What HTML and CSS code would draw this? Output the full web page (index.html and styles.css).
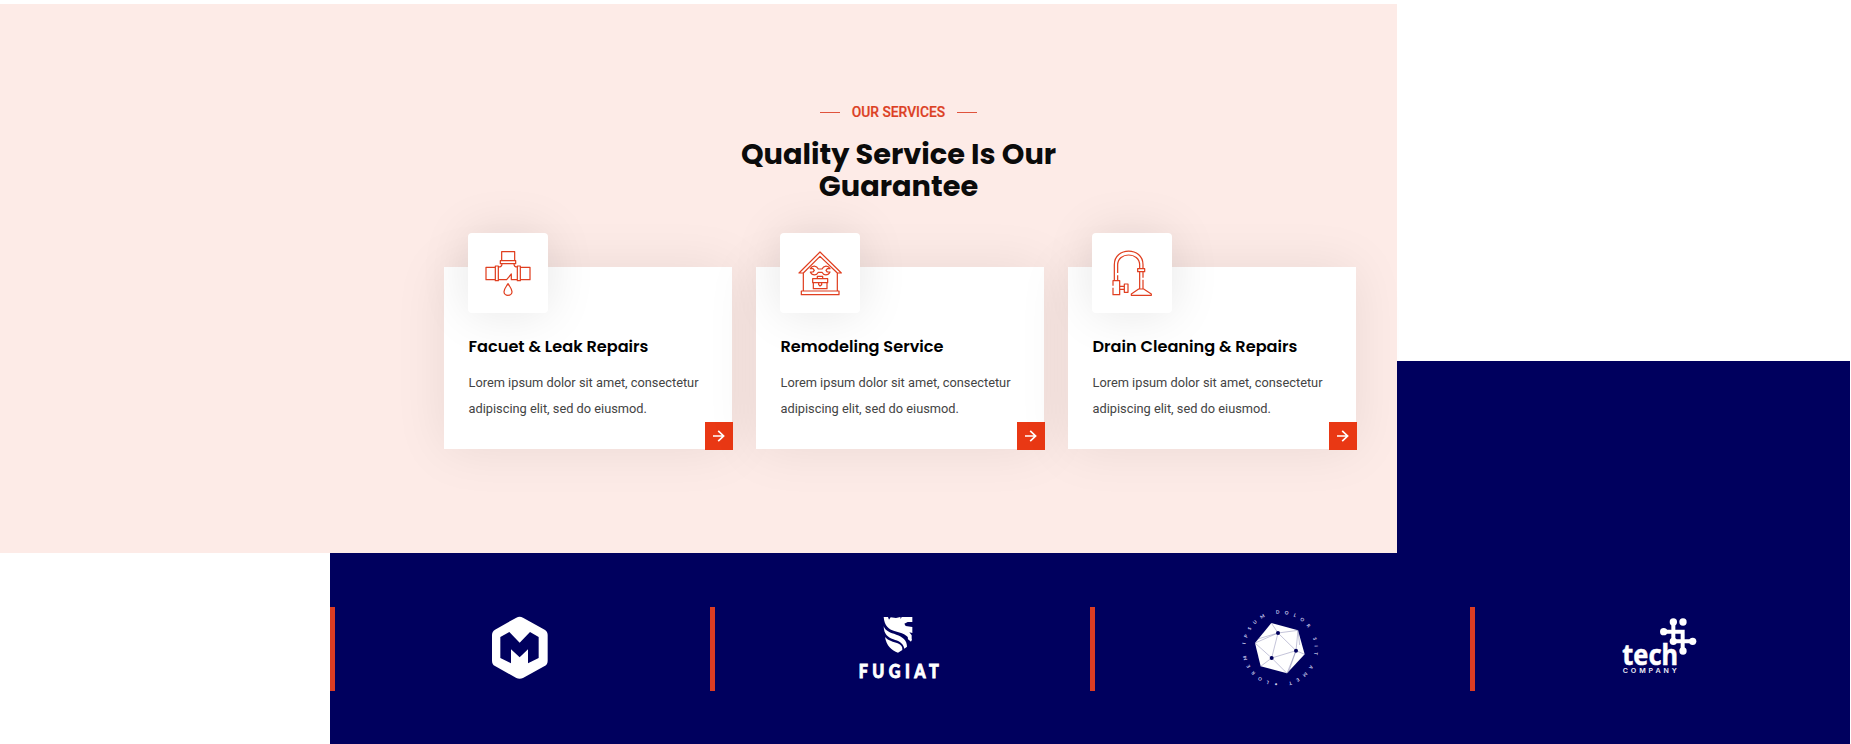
FILE: index.html
```
<!DOCTYPE html>
<html lang="en">
<head>
<meta charset="utf-8">
<title>Our Services</title>
<link rel="stylesheet" href="styles.css">
</head>
<body>
<section class="services">
  <header class="heading">
    <p class="eyebrow">OUR SERVICES</p>
    <h2 class="title">Quality Service Is Our<br>Guarantee</h2>
  </header>
  <div class="cards">
    <article class="card">
      <div class="icon-box">
        <svg class="icon" viewBox="114 38 240 240">
          <path d="M215 94H254V121H215zM211 121H257V130H211zM216 130C216 137 212 140 205 140M252 130C252 137 256 140 262 140M168 141H196V178H168zM196 137H205V181H196zM262 137H271V181H262zM271 141H300V178H271zM205 178H230L244 161V178H262M234 190C229 199 222 205 222 214A12 11 0 0 0 246 214C246 205 239 199 234 190z"/>
        </svg>
      </div>
      <h3 class="card-title">Facuet &amp; Leak Repairs</h3>
      <p class="card-text">Lorem ipsum dolor sit amet, consectetur adipiscing elit, sed do eiusmod.</p>
      <a class="more" href="#"><svg viewBox="0 0 28 28"><path d="M8 14H18.5M13.2 8.8L18.6 14L13.2 19.2"/></svg></a>
    </article>
    <article class="card">
      <div class="icon-box">
        <svg class="icon" viewBox="120 38 240 240">
          <path d="M240 95L177 158H190L240 108L292 158H304zM190 158V212M292 158V212M184 212H297V223H184zM218 175H263V187H218zM220 187V205H261V187M232 175V168H248V175M236 187H245V193L240 197L236 193z"/>
          <path d="M211 145H219L223 150L219 155H211C217 167 230 166 235 156H246C251 166 264 167 270 155H262L258 150L262 145H270C264 134 251 135 246 146H235C230 135 217 134 211 145z"/>
        </svg>
      </div>
      <h3 class="card-title">Remodeling Service</h3>
      <p class="card-text">Lorem ipsum dolor sit amet, consectetur adipiscing elit, sed do eiusmod.</p>
      <a class="more" href="#"><svg viewBox="0 0 28 28"><path d="M8 14H18.5M13.2 8.8L18.6 14L13.2 19.2"/></svg></a>
    </article>
    <article class="card">
      <div class="icon-box">
        <svg class="icon" viewBox="126 38 240 240">
          <path d="M193 181V133C193 79 279 79 279 133V145M203 158V134C203 94 269 94 269 134V145M203 165V181M263 145H284V154H263zM269 154V205M279 154V172M279 178V205M189 196V181H209V223H189V202M209 198H223M209 207H223M223 191H234V216H223zM266 206H281L304 221V225H244V221z"/>
        </svg>
      </div>
      <h3 class="card-title">Drain Cleaning &amp; Repairs</h3>
      <p class="card-text">Lorem ipsum dolor sit amet, consectetur adipiscing elit, sed do eiusmod.</p>
      <a class="more" href="#"><svg viewBox="0 0 28 28"><path d="M8 14H18.5M13.2 8.8L18.6 14L13.2 19.2"/></svg></a>
    </article>
  </div>
</section>
<section class="brands">
  <div class="brand">
    <svg class="logo logo-m" viewBox="510 225 180 198">
      <path class="solid" d="M589 233Q599 228 609 233L674 269Q683 274 683 285V362Q683 373 674 378L609 414Q599 419 589 414L525 378Q516 373 516 362V285Q516 274 525 269z"/>
      <path class="cut" d="M541 291L568 276L599 308L630 276L656 291V354L624 370V328L599 352L573 328V370L541 354z"/>
    </svg>
  </div>
  <div class="brand">
    <svg class="logo logo-fugiat" viewBox="470 70 255 201">
      <path class="solid" d="M550 79H563L566 87L571 80L587 82L600 79L601 85L604 79H636V94H622L612 99L616 106L636 109V127L627 125L634 134V151C622 133 603 126 582 121C566 117 552 105 550 79z"/>
      <path class="solid" d="M550 107C556 122 570 126 588 132C606 138 620 148 620 168L612 174C608 156 594 151 579 146C562 140 551 131 550 107zM554 139C564 151 580 153 592 158C603 163 607 169 606 178L593 186C574 179 558 165 554 139z"/>
      <path class="solid" d="M622 136L634 146L632 153L623 146z"/>
      <text class="fugiat" transform="translate(475 263) scale(.9 1)" textLength="267">FUGIAT</text>
    </svg>
  </div>
  <div class="brand">
    <svg class="logo logo-ring" viewBox="60 39 240 240">
      <path class="solid" d="M154 84L234 106L254 178L201 235L122 214L105 144z"/>
      <path class="edge" d="M105 144L174 114L228 167L155 189L105 144M154 84L174 114L234 106L228 167L254 178M122 214L155 189L201 235L228 167L205 233M174 114L155 189M113 132L174 114M234 106L239 150"/>
      <circle class="cut" cx="174" cy="114" r="6"/><circle class="cut" cx="228" cy="167" r="6"/><circle class="cut" cx="155" cy="189" r="6"/>
      <path id="ring" fill="none" d="M148 259A104 104 0 1 1 212 259A104 104 0 0 1 148 259"/>
      <text class="ring-text"><textPath href="#ring" textLength="636">LOREM IPSUM DOLOR SIT AMET •</textPath></text>
    </svg>
  </div>
  <div class="brand">
    <svg class="logo logo-tech" viewBox="60 48 240 180">
      <path class="link" d="M191 95H248V153M220 66V124M220 124H278"/>
      <g class="solid"><circle cx="220" cy="66" r="11"/><circle cx="249" cy="66" r="11"/><circle cx="191" cy="95" r="11"/><circle cx="220" cy="124" r="11"/><circle cx="278" cy="124" r="11"/><circle cx="249" cy="153" r="11"/></g>
      <text class="tech" x="67" y="194" textLength="167" lengthAdjust="spacingAndGlyphs">tech</text>
      <text class="company" transform="translate(68 218) scale(1.25 1)" textLength="130">COMPANY</text>
    </svg>
  </div>
</section>
</body>
</html>
```
FILE: styles.css
```
* { box-sizing: border-box; }
body {
  margin: 0;
  padding-top: 4px;
  background: #fff;
  font-family: Roboto, sans-serif;
  overflow: hidden;
}
h2, h3, p { margin: 0; }

.services {
  position: relative;
  z-index: 1;
  width: 1397px;
  height: 549px;
  padding: 98px 41px 0 444px;
  background: #fdebe7;
}
.heading { width: 909px; text-align: center; }
.eyebrow {
  display: flex;
  justify-content: center;
  align-items: center;
  gap: 12px;
  height: 20px;
  font-size: 13.8px;
  font-weight: 500;
  color: #dc3f24;
  -webkit-text-stroke: .2px #dc3f24;
}
.eyebrow::before, .eyebrow::after {
  content: "";
  width: 20px;
  height: 1px;
  background: #e0533c;
}
.title {
  margin-top: 16px;
  font: 700 28.8px/32px Poppins, Inter, sans-serif;
  color: #0b0b0b;
}
.cards { display: flex; gap: 24px; margin-top: 65px; }
.card {
  position: relative;
  width: 288px;
  height: 182px;
  padding: 0 24px;
  background: #fff;
  box-shadow: 0 0 50px rgba(0, 0, 0, .08);
}
.icon-box {
  width: 80px;
  height: 80px;
  margin-top: -34px;
  border-radius: 4px;
  background: #fff;
  box-shadow: 0 0 50px rgba(0, 0, 0, .1);
}
.icon { display: block; width: 80px; height: 80px; fill: none; stroke: #e03f20; stroke-width: 3.7; stroke-linejoin: round; }
.card-title {
  margin: 22px 0 0 .5px;
  font: 600 16.15px/24px Poppins, Inter, sans-serif;
  color: #000;
  white-space: nowrap;
}
.card-text { margin: 11px 0 0 .5px; font-size: 12.8px; line-height: 26px; color: #444; }
.more { position: absolute; right: -1px; bottom: -1px; width: 28px; height: 28px; background: #e93814; }
.more svg { display: block; width: 28px; height: 28px; fill: none; stroke: #fff; stroke-width: 1.7; }

.brands {
  display: flex;
  align-items: flex-end;
  height: 383px;
  margin: -192px 1px 0 330px;
  padding-bottom: 53px;
  background: #00005e;
}
.brand {
  display: flex;
  align-items: center;
  justify-content: center;
  width: 380px;
  height: 84px;
  border-left: 5px solid #dc3c23;
}
.logo { overflow: visible; }
.logo-m { width: 60px; height: 66px; margin: 0 5px 2px 0; }
.logo-fugiat { width: 85px; height: 67px; margin: 0 7px 4px 0; }
.logo-ring { width: 80px; height: 80px; margin: 0 5px 2px 0; }
.logo-tech { width: 80px; height: 60px; margin: 0 5px 6px 0; }
.solid { fill: #fff; }
.cut { fill: #00005e; }
.edge { fill: none; stroke: #6a6aa0; stroke-width: 1.2; }
.link { fill: none; stroke: #fff; stroke-width: 12; }
.fugiat { font: 900 54px Lato, sans-serif; fill: #fff; stroke: #fff; stroke-width: 2.5; }
.ring-text { font: 700 14px Lato, sans-serif; fill: #d0d0f0; }
.tech { font: 700 83px "Noto Sans", sans-serif; fill: #fff; stroke: #fff; stroke-width: 1.5; }
.company { font: 600 17px Inter, sans-serif; fill: #f0f0fa; }
```
